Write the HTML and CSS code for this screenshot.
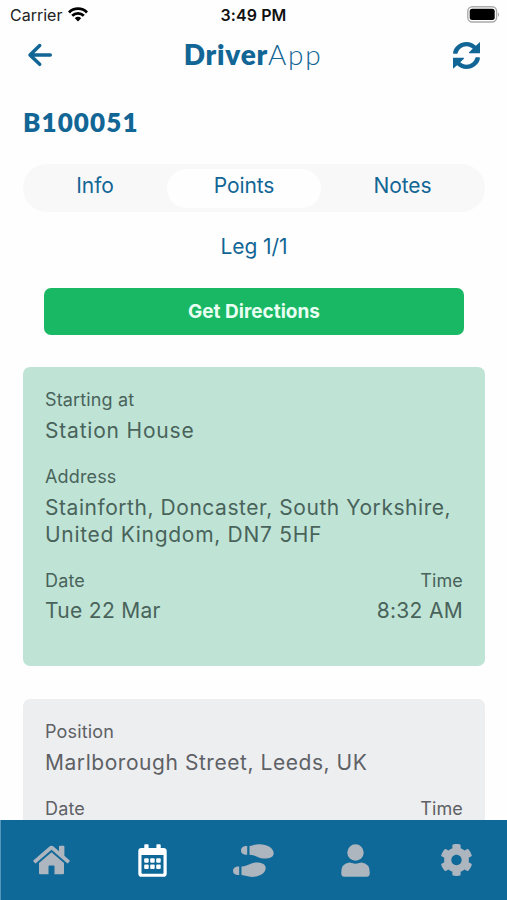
FILE: index.html
```html
<!DOCTYPE html>
<html lang="en">
<head>
<meta charset="utf-8">
<meta name="viewport" content="width=device-width">
<title>DriverApp</title>
<link rel="stylesheet" href="styles.css">
</head>
<body>
<div class="app">
  <div class="status">
    <div class="carrier"><span>Carrier</span>
      <svg width="20" height="15" viewBox="0 0 20 15" fill="none" stroke="#000" stroke-width="2.8"><path d="M1 5.4a12.8 12.8 0 0 1 18 0M4.2 8.8a8.2 8.2 0 0 1 11.6 0"/><path d="M6.8 11.2a4.5 4.5 0 0 1 6.4 0L10 14.6z" fill="#000" stroke="none"/></svg>
    </div>
    <div class="clock">3:49 PM</div>
    <svg class="battery" width="33" height="17" viewBox="0 0 33 17"><rect x=".8" y=".8" width="28.8" height="15.2" rx="4.5" fill="#fff" stroke="#aaa" stroke-width="1.4"/><rect x="2.7" y="2.8" width="25" height="11.2" rx="2.5"/><path d="M31 6.2q2.2 2.3 0 4.6z" fill="#aaa"/></svg>
  </div>
  <header class="header">
    <svg width="26" height="24" viewBox="0 0 26 24" fill="none" stroke="#126695" stroke-width="3.5" stroke-linecap="round" stroke-linejoin="round"><path d="M12.7 2.5 3 12l9.7 9.3M3.5 12h19.8"/></svg>
    <h1 class="logo"><b>Driver</b><span>App</span></h1>
    <svg width="27" height="27" viewBox="8 8 496 496" fill="#126695"><path d="M370.72 133.28C339.458 104.008 298.888 87.962 255.848 88c-77.458.068-144.328 53.178-162.791 126.85-1.344 5.363-6.122 9.15-11.651 9.15H12V188C34 94 134.813 8 256 8c66.448 0 126.791 26.136 171.315 68.685L504 8V216H304v-20z"/><path d="M141.280 378.720c31.262 29.273 71.835 45.319 114.876 45.280 77.418-.07 144.315-53.144 162.787-126.849 1.344-5.363 6.122-9.150 11.651-9.150H500V324C478 418 377.187 504 256 504c-66.448 0-126.791-26.136-171.315-68.685L8 498V296H208v20z"/></svg>
  </header>
  <main class="main">
    <h2 class="job">B100051</h2>
    <div class="tabs"><div class="tab info">Info</div><div class="tab active">Points</div><div class="tab notes">Notes</div></div>
    <div class="leg">Leg 1/1</div>
    <button class="directions">Get Directions</button>
    <section class="card start">
      <div class="label">Starting at</div>
      <div class="value place">Station House</div>
      <div class="label">Address</div>
      <div class="value">Stainforth, Doncaster, South Yorkshire,<br><span class="region">United Kingdom, DN7 5HF</span></div>
      <div class="row"><div><div class="label">Date</div><div class="value">Tue 22 Mar</div></div><div class="right"><div class="label">Time</div><div class="value">8:32 AM</div></div></div>
    </section>
    <section class="card">
      <div class="label">Position</div>
      <div class="value">Marlborough Street, Leeds, UK</div>
      <div class="row"><div class="label">Date</div><div class="label">Time</div></div>
    </section>
  </main>
  <nav class="nav">
    <div><svg width="37" height="30" viewBox="0 0 37 30"><path d="M18.5.8q1.3 0 2.3.9l5.2 4.6V1.5q0-.8.8-.8h3.8q.8 0 .8.8v9.3l5 4.4q.7.6.1 1.3l-1.3 1.5q-.6.7-1.3.1L18.5 4.8 3.1 18.1q-.7.6-1.3-.1L.5 16.5q-.6-.7.1-1.3L16.2 1.7q1-.9 2.3-.9z"/><path d="M18.5 7.2 31 17.9v10.3q0 1-1 1h-8.5v-7.8q0-.8-.8-.8h-4.4q-.8 0-.8.8v7.8H7q-1 0-1-1V17.9z"/></svg></div>
    <div class="current"><svg width="29" height="33" viewBox="0 0 29 33"><path fill-rule="evenodd" d="M6.3 4V1q0-.8.8-.8h2.7q.8 0 .8.8v3h7.8V1q0-.8.8-.8h2.7q.8 0 .8.8v3h2.8Q28.700 4 28.700 7.200v22.500q0 3.100-3.200 3.100h-22Q.3 32.800.3 29.700V7.200Q.3 4 3.500 4zM3.500 11v18q0 .7.7.7h20.600q.7 0 .7-.7V11z"/><g><rect x="6.200" y="14.200" width="4.500" height="4.500" rx="1"/><rect x="12.200" y="14.200" width="4.500" height="4.500" rx="1"/><rect x="18.200" y="14.200" width="4.500" height="4.500" rx="1"/><rect x="6.200" y="20.400" width="4.500" height="4.500" rx="1"/><rect x="12.200" y="20.400" width="4.500" height="4.500" rx="1"/><rect x="18.200" y="20.400" width="4.500" height="4.500" rx="1"/></g></svg></div>
    <div><svg width="41" height="33" viewBox="0 0 41 33"><path d="M14.200 2v8.700h-1.700Q8 10.200 8 6.400T12.500 2z"/><path d="M16.500 2c4.200-.4 6-1.800 10.300-1.800C34 .2 40.700 4 40.700 9.200c0 3.800-4.200 5.400-9.200 5.400-6.200 0-8-3.700-15-3.900z"/><path d="M6.200 22.400v8.700H4.500Q0 30.600 0 26.800t4.500-4.400z"/><path d="M8.500 22.400c7-.2 8.800-3.900 15-3.900 5 0 9.200 1.600 9.200 5.400 0 5.200-6.700 9-13.900 9-4.300 0-6.100-1.400-10.300-1.800z"/></svg></div>
    <div><svg width="29" height="33" viewBox="0 0 29 33"><ellipse cx="14.500" cy="8.500" rx="8.200" ry="8.300"/><path d="M8.500 18.500q1 0 2.500.6 3.500 1.300 7 0 1.500-.6 2.500-.6 8.300.8 8.300 10.500 0 3.700-3 3.700H3.200q-3 0-3-3.700 0-9.700 8.300-10.500z"/></svg></div>
    <div><svg width="31" height="32" viewBox="18 8 476 496"><path d="M487.400 315.700l-42.600-24.600c4.300-23.200 4.300-47 0-70.200l42.600-24.600c4.900-2.800 7.100-8.600 5.500-14-11.100-35.600-30-67.800-54.700-94.600-3.800-4.100-10-5.100-14.800-2.300L380.800 110c-17.900-15.400-38.500-27.300-60.800-35.100V25.800c0-5.600-3.900-10.500-9.400-11.700-36.700-8.200-74.300-7.800-109.200 0-5.500 1.200-9.400 6.100-9.400 11.700V75c-22.200 7.900-42.800 19.800-60.800 35.100L88.700 85.500c-4.900-2.800-11-1.900-14.800 2.300-24.700 26.700-43.600 58.900-54.700 94.600-1.700 5.400.6 11.200 5.500 14L67.300 221c-4.300 23.200-4.300 47 0 70.200l-42.600 24.600c-4.900 2.800-7.100 8.600-5.500 14 11.100 35.600 30 67.800 54.700 94.600 3.800 4.100 10 5.100 14.800 2.300l42.600-24.600c17.900 15.400 38.500 27.300 60.800 35.100v49.200c0 5.600 3.900 10.500 9.400 11.700 36.700 8.200 74.300 7.800 109.200 0 5.500-1.200 9.400-6.100 9.400-11.700v-49.200c22.200-7.900 42.800-19.800 60.800-35.100l42.600 24.600c4.900 2.800 11 1.900 14.800-2.300 24.700-26.700 43.600-58.900 54.700-94.600 1.500-5.500-.7-11.300-5.600-14.100zM256 336c-44.100 0-80-35.900-80-80s35.900-80 80-80 80 35.900 80 80-35.900 80-80 80z"/></svg></div>
  </nav>
</div>
</body>
</html>
```
FILE: styles.css
```css
* { box-sizing: border-box; }
body { margin: 0; background: #fefefe; font-family: Inter, sans-serif; color: #126695; }
svg { display: block; flex: none; }
.app { height: 900px; display: flex; flex-direction: column; overflow: hidden; }
.status { height: 30px; flex: none; display: grid; grid-template-columns: 1fr auto 1fr; align-items: center; padding: 0 7px 0 10px; color: #222; font-size: 16px; }
.carrier { display: flex; align-items: center; gap: 6px; margin-top: -1px; }
.clock { font-weight: 600; font-size: 16px; color: #111; letter-spacing: .1px; margin: -1px 3px 0 0; }
.battery { justify-self: end; margin-top: -2px; }
.header { height: 50px; flex: none; display: flex; justify-content: space-between; align-items: center; padding: 0 27px; }
.logo { margin: -2px 0 0; font: 400 28px/40px Lato, sans-serif; }
.logo b { font-weight: 800; letter-spacing: .8px; }
.logo span { font-weight: 300; letter-spacing: 1.7px; }
.main { flex: 1; min-height: 0; overflow: hidden; padding: 22px 22px 0 23px; }
.job { margin: 0; font: 800 26px/40px Lato, sans-serif; letter-spacing: 1.1px; }
.tabs { height: 48px; margin-top: 22px; padding: 5px 5px 4px; border-radius: 24px; background: #f8f8f8; display: grid; grid-template-columns: 139px 154px 1fr; gap: 0; }
.tab { height: 39px; border-radius: 20px; text-align: center; font-size: 21px; line-height: 34px; letter-spacing: -.1px; }
.tab.active { background: #fefefe; }
.info { padding-right: 5px; }
.notes { padding-left: 4px; }
.leg { margin-top: 20px; text-align: center; font-size: 21px; line-height: 30px; letter-spacing: -.1px; }
.directions { display: block; width: 420px; height: 47px; margin: 26px 0 0 21px; border: 0; border-radius: 7px; background: #19b864; color: #e9fff3; font: 700 19px Inter, sans-serif; padding: 0; }
.card { height: 299px; margin-top: 32px; padding: 20px 22px; border-radius: 7px; background: #edeef0; color: #5e6165; }
.card + .card { margin-top: 33px; }
.start { background: #bfe4d6; color: #49635b; }
.label { font-size: 18px; line-height: 26px; letter-spacing: .15px; }
.value { margin: 4px 0 20px; font-size: 21px; line-height: 27px; letter-spacing: .55px; white-space: nowrap; }
.place { letter-spacing: .8px; }
.region { letter-spacing: .7px; }
.row { display: flex; justify-content: space-between; }
.row .value { margin-top: 3px; letter-spacing: .3px; }
.right { text-align: right; }
.nav { height: 80px; flex: none; display: grid; grid-template-columns: repeat(5, 1fr); border-left: 1px solid #5896bb; background: #0e6898; fill: #adb5bf; }
.nav div { display: flex; align-items: center; justify-content: center; }
.nav .current { fill: #fff; }
```
